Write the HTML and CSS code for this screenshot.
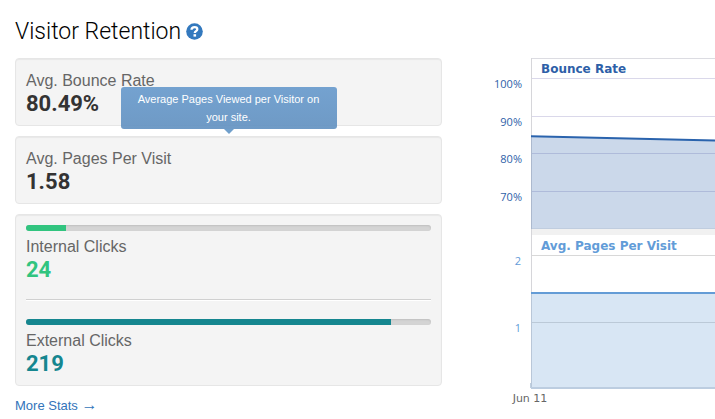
FILE: index.html
```html
<!DOCTYPE html>
<html lang="en">
<head>
<meta charset="utf-8">
<title>Visitor Retention</title>
<link rel="stylesheet" href="styles.css">
</head>
<body>
<main class="page">
  <section class="stats">
    <header class="heading">
      <h1>Visitor Retention</h1>
      <button class="help" type="button" aria-label="Help">
        <svg width="17" height="17" viewBox="0 0 17 17" aria-hidden="true">
          <circle cx="8.5" cy="8.5" r="8.3" fill="#3379be"/>
          <path d="M5.5 6.7C5.6 4.8 6.8 4.1 8.6 4.1s2.7 .8 2.7 2.1c0 1.9-2.5 1.9-2.5 3.8" fill="none" stroke="#fff" stroke-width="2.3"/>
          <rect x="7.5" y="11.2" width="2.6" height="2.4" fill="#fff"/>
        </svg>
      </button>
    </header>
    <div class="card">
      <p class="label">Avg. Bounce Rate</p>
      <p class="value">80.49%</p>
    </div>
    <div class="card hinted">
      <p class="label">Avg. Pages Per Visit</p>
      <p class="value">1.58</p>
      <div class="tooltip" role="tooltip">Average Pages Viewed per Visitor on your site.</div>
    </div>
    <div class="card">
      <div class="clicks internal">
        <div class="track"><div class="bar" style="width: 9.88%"></div></div>
        <p class="label">Internal Clicks</p>
        <p class="value">24</p>
      </div>
      <hr class="divider">
      <div class="clicks external">
        <div class="track"><div class="bar" style="width: 90.12%"></div></div>
        <p class="label">External Clicks</p>
        <p class="value">219</p>
      </div>
    </div>
    <a class="more" href="#">More Stats <span class="arrow">→</span></a>
  </section>
  <section class="chart">
    <svg class="plot" width="100%" height="356" role="img" aria-label="Bounce rate and average pages per visit">
      <g class="axis bounce">
        <text x="80" y="38">100%</text>
        <text x="80" y="76">90%</text>
        <text x="80" y="113">80%</text>
        <text x="80" y="151">70%</text>
      </g>
      <g class="axis pages">
        <text x="79" y="215">2</text>
        <text x="79" y="282">1</text>
      </g>
      <text class="date" x="88" y="352">Jun 11</text>
      <svg x="89" y="0" width="100%" height="340">
        <rect width="100%" height="1" y="8" fill="#dcdce2"/>
        <rect width="100%" height="1" y="28" fill="#dad8ea"/>
        <rect width="100%" height="1" y="66" fill="#dad8ea"/>
        <rect width="100%" height="1" y="103" fill="#dad8ea"/>
        <rect width="100%" height="1" y="141" fill="#dad8ea"/>
        <rect width="100%" height="7" y="178" fill="#f1f1f1"/>
        <rect width="100%" height="1" y="205" fill="#d8d8d8"/>
        <rect width="100%" height="1" y="272" fill="#d8d8d8"/>
        <rect width="1" height="330" y="8" fill="#d6d6da"/>
        <svg width="184" height="340" viewBox="0 0 184 340" preserveAspectRatio="none">
          <path d="M0 86.2 184 90.6V179H0z" fill="#2e65ad" fill-opacity=".25"/>
          <path d="M0 86.2 184 90.6" fill="none" stroke="#2a63ad" stroke-width="2"/>
        </svg>
        <rect width="100%" height="96" y="243" fill="#629cd5" fill-opacity=".25"/>
        <rect width="100%" height="2" y="242" fill="#649cd6"/>
        <rect width="100%" height="2" y="337" fill="#bccde0"/>
      </svg>
      <rect x="88" y="333" width="1" height="5" fill="#c0d0e0"/>
      <text class="title bounce" x="99" y="23">Bounce Rate</text>
      <text class="title pages" x="99" y="200">Avg. Pages Per Visit</text>
    </svg>
  </section>
</main>
</body>
</html>
```
FILE: styles.css
```css
* { box-sizing: border-box; }

body {
  margin: 0;
  background: #fff;
  color: #333;
  font-family: "Liberation Sans", Arial, sans-serif;
  overflow-x: hidden;
}

.page {
  display: grid;
  grid-template-columns: 427fr 273fr;
  padding: 16px 0 0 15px;
}

h1, p { margin: 0; }

.heading {
  display: flex;
  align-items: center;
  gap: 5px;
  height: 30px;
  margin-bottom: 12px;
}

h1 {
  padding-top: 2px;
  color: #000;
  font: 350 23px/30px Roboto, sans-serif;
}

.help {
  display: flex;
  padding: 0;
  border: 0;
  background: none;
}

.card {
  margin-bottom: 10px;
  padding: 10px;
  border: 1px solid #e6e6e6;
  border-radius: 4px;
  background: #f4f4f4;
  box-shadow: inset 0 1px 1px rgba(0, 0, 0, .05);
}

.label {
  color: #666;
  font-size: 16px;
  line-height: 24px;
}

.value {
  font: 700 22px/22px Roboto, sans-serif;
}

.hinted { position: relative; }

.tooltip {
  position: absolute;
  bottom: calc(100% + 8px);
  left: 50%;
  width: 216px;
  padding: 3px 12px;
  border-radius: 3px;
  background: linear-gradient(rgba(102, 153, 204, .9), rgba(96, 144, 192, .9));
  color: #fff;
  font-size: 11px;
  line-height: 18px;
  text-align: center;
  transform: translateX(-50%);
}

.tooltip::after {
  content: "";
  position: absolute;
  top: 100%;
  left: 50%;
  border: 5px solid transparent;
  border-top-color: #709fcb;
  border-bottom: 0;
  transform: translateX(-50%);
}

.track {
  height: 6px;
  margin-bottom: 4px;
  border-radius: 3px;
  background: #d4d4d4;
  box-shadow: inset 0 1px 2px rgba(0, 0, 0, .1);
  overflow: hidden;
}

.bar { height: 100%; }

.internal .bar { background: #31c47f; }
.internal .value { color: #31c47f; }
.external .bar { background: #15868f; }
.external .value { color: #15868f; }

.divider {
  height: 2px;
  margin: 18px 0;
  border: 0;
  border-top: 1px solid #d0d0d0;
  border-bottom: 1px solid #fff;
}

.more {
  color: #3274ba;
  font-size: 13px;
  line-height: 20px;
  text-decoration: none;
}

.arrow {
  font-size: 16px;
  line-height: 1;
}

.chart { padding-top: 34px; }

.plot {
  display: block;
  font-family: "DejaVu Sans", sans-serif;
  font-size: 11px;
}

.axis {
  font-family: "Open Sans", sans-serif;
  text-anchor: end;
}

.bounce { fill: #2e5fa8; }
.pages { fill: #629cd8; }

.date {
  fill: #666;
  text-anchor: middle;
}

.title {
  font-size: 12px;
  font-weight: 700;
}
```
